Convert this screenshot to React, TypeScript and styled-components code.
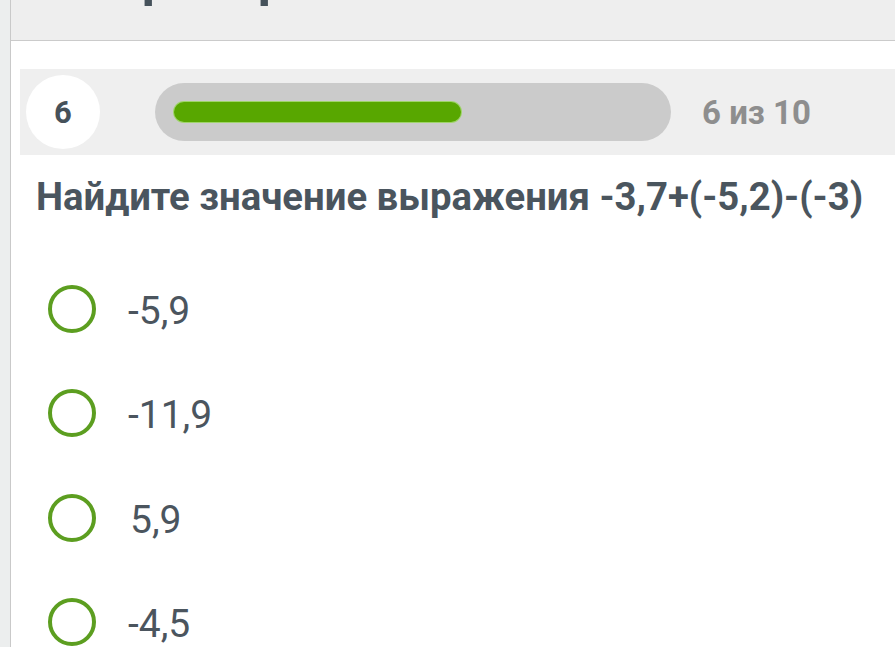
import React from "react";
import styled, { createGlobalStyle } from "styled-components";

const Global = createGlobalStyle`
  html, body { margin: 0; padding: 0; background: #ffffff; }
  body { font-family: Roboto, "Noto Sans", "Liberation Sans", sans-serif; overflow: hidden; }
`;

const Shell = styled.div`
  display: flex;
  width: 895px;
  height: 647px;
  overflow: hidden;
`;

const Rail = styled.div`
  width: 10px;
  flex: none;
  background: #eceeee;
  border-right: 1px solid #c9c9c9;
`;

const Main = styled.main`
  flex: 1;
  min-width: 0;
  display: flex;
  flex-direction: column;
  & > * { flex-shrink: 0; }
`;

const Header = styled.header`
  height: 40px;
  background: #eeeeee;
  border-bottom: 1px solid #cbcbcb;
  overflow: hidden;
  padding-left: 94px;
`;

const Title = styled.h1`
  margin: -48px 0 0;
  font-size: 52px;
  line-height: 52px;
  font-weight: 700;
  color: #46525b;
  white-space: nowrap;
`;

const ProgressStrip = styled.section`
  margin: 28px 0 0 9px;
  height: 86px;
  background: #efefef;
  display: flex;
  align-items: center;
  padding-left: 6px;
`;

const StepBadge = styled.div`
  width: 74px;
  height: 74px;
  flex: none;
  border-radius: 50%;
  background: #ffffff;
  display: flex;
  align-items: center;
  justify-content: center;
  font-size: 31px;
  font-weight: 700;
  color: #46515a;
`;

const Track = styled.div`
  margin-left: 55px;
  width: 516px;
  height: 58px;
  flex: none;
  border-radius: 29px;
  background: #cbcbcb;
  display: flex;
  align-items: center;
  padding-left: 19px;
  box-sizing: border-box;
`;

const Fill = styled.div`
  height: 20px;
  border-radius: 10px;
  background: #58a700;
  box-shadow: 0 0 0 1px #9fd46a;
`;

const Counter = styled.span`
  margin-left: 31px;
  font-size: 33px;
  font-weight: 700;
  color: #8e8e8e;
  white-space: nowrap;
`;

const Question = styled.h2`
  margin: 19px 0 0 25px;
  font-size: 38.3px;
  line-height: 46px;
  font-weight: 700;
  color: #4a555e;
  white-space: nowrap;
`;

const Options = styled.ul`
  list-style: none;
  margin: 37px 0 0;
  padding: 0 0 0 37px;
`;

const Option = styled.li`
  height: 104.3px;
  display: flex;
  align-items: center;
  gap: 32px;
`;

const Radio = styled.span`
  width: 48px;
  height: 48px;
  flex: none;
  box-sizing: border-box;
  border-radius: 50%;
  border: 4.5px solid #5c9e20;
`;

const Label = styled.span<{ $indent?: number }>`
  font-size: 39px;
  line-height: 39px;
  padding-top: 5px;
  padding-left: ${(p) => p.$indent ?? 0}px;
  color: #4b555e;
`;

const answers = [
  { text: "-5,9", indent: 0 },
  { text: "-11,9", indent: 0 },
  { text: "5,9", indent: 2 },
  { text: "-4,5", indent: 0 },
];

export default function App() {
  const current = 6;
  const total = 10;
  return (
    <>
      <Global />
      <Shell>
        <Rail />
        <Main>
          <Header>
            <Title>Проверочная</Title>
          </Header>
          <ProgressStrip>
            <StepBadge>{current}</StepBadge>
            <Track>
              <Fill style={{ width: 287 }} />
            </Track>
            <Counter>
              {current} из {total}
            </Counter>
          </ProgressStrip>
          <Question>Найдите значение выражения -3,7+(-5,2)-(-3)</Question>
          <Options>
            {answers.map((a) => (
              <Option key={a.text}>
                <Radio />
                <Label $indent={a.indent}>{a.text}</Label>
              </Option>
            ))}
          </Options>
        </Main>
      </Shell>
    </>
  );
}
